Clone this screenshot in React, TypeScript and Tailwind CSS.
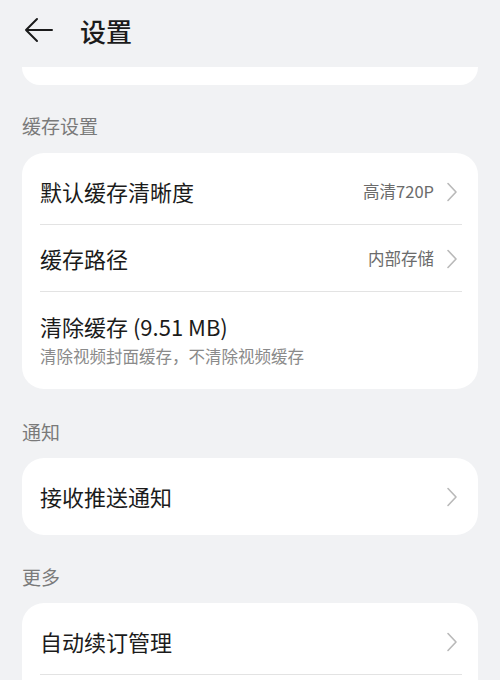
import { ReactNode } from "react";

const font = {
  fontFamily: '"Noto Sans CJK SC", "Noto Sans", sans-serif',
};

const Chevron = () => (
  <svg width="12" height="20" viewBox="0 0 12 20" fill="none">
    <path
      d="M2 1.5 L10 10 L2 18.5"
      stroke="#b9b9b9"
      strokeWidth="1.6"
      strokeLinecap="round"
      strokeLinejoin="round"
    />
  </svg>
);

const SectionLabel = ({ children, className }: { children: ReactNode; className: string }) => (
  <div className={`px-[22px] text-[19px] leading-[24px] text-[#7a7a7a] ${className}`}>
    {children}
  </div>
);

const Row = ({
  title,
  value,
  divider = true,
}: {
  title: string;
  value?: string;
  divider?: boolean;
}) => (
  <div className="relative flex h-[67px] items-center pl-[18px] pr-[20px]">
    <span className="flex-1 text-[22px] text-[#1b1b1b]">{title}</span>
    {value && <span className="mr-[12px] text-[16.5px] text-[#6b6b6b]">{value}</span>}
    <Chevron />
    {divider && (
      <div className="absolute bottom-0 left-[18px] right-[16px] h-px bg-[#e3e3e3]" />
    )}
  </div>
);

const App = () => {
  return (
    <div className="h-[680px] w-[500px] overflow-hidden bg-[#f1f2f4]" style={font}>
      <div className="flex h-[60px] items-center pl-[24px]">
        <svg width="29" height="26" viewBox="0 0 29 26" fill="none">
          <path
            d="M28 13 H2 M13 2 L2 13 L13 24"
            stroke="#1b1b1b"
            strokeWidth="2"
            strokeLinecap="round"
            strokeLinejoin="round"
          />
        </svg>
        <span className="ml-[27px] text-[26px] font-medium text-[#1b1b1b]">设置</span>
      </div>

      <div className="mx-[22px] mt-[7px] h-[18px] rounded-b-[22px] bg-white" />

      <SectionLabel className="pt-[29px] pb-[15px]">缓存设置</SectionLabel>
      <div className="mx-[22px] rounded-[22px] bg-white pt-[5px]">
        <Row title="默认缓存清晰度" value="高清720P" />
        <Row title="缓存路径" value="内部存储" />
        <div className="pl-[18px] pt-[20px] pb-[23px]">
          <div className="text-[22px] leading-[28px] text-[#1b1b1b]">清除缓存 (9.51 MB)</div>
          <div className="mt-[6px] text-[16.5px] leading-[20px] text-[#8a8a8a]">
            清除视频封面缓存，不清除视频缓存
          </div>
        </div>
      </div>

      <SectionLabel className="pt-[31px] pb-[14px]">通知</SectionLabel>
      <div className="mx-[22px] flex h-[77px] items-center rounded-[22px] bg-white pl-[18px] pr-[20px]">
        <span className="flex-1 text-[22px] text-[#1b1b1b]">接收推送通知</span>
        <Chevron />
      </div>

      <SectionLabel className="pt-[30px] pb-[14px]">更多</SectionLabel>
      <div className="mx-[22px] h-[120px] rounded-[22px] bg-white pt-[5px]">
        <Row title="自动续订管理" />
      </div>
    </div>
  );
};

export default App;
